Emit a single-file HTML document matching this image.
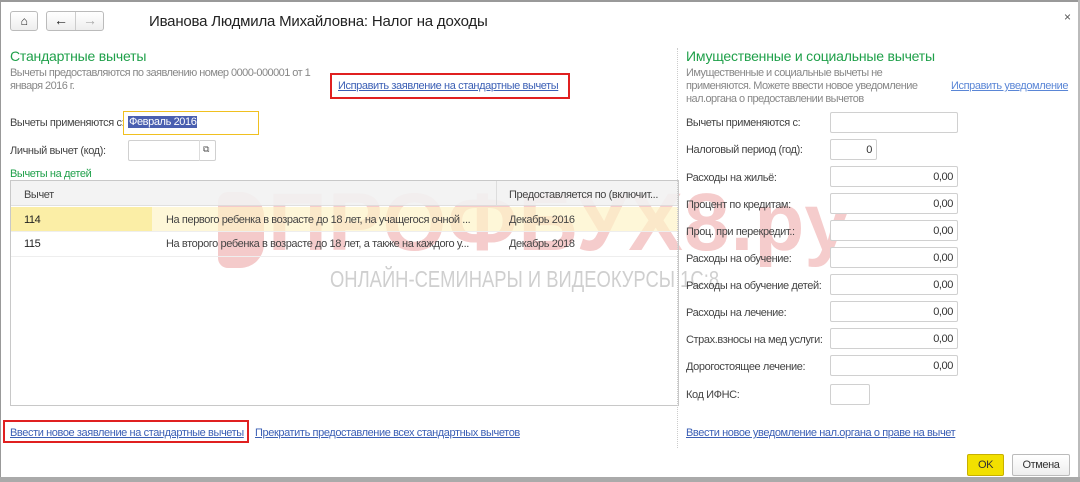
<!DOCTYPE html>
<html><head><meta charset="utf-8"><style>
*{margin:0;padding:0;box-sizing:border-box}
body{width:1080px;height:482px;background:#fff;font-family:"Liberation Sans",sans-serif;font-size:11px;letter-spacing:-0.4px;color:#444;position:relative;overflow:hidden}
.a{position:absolute;white-space:nowrap}
.lnk{color:#3b5fb5;text-decoration:underline}
.inp{position:absolute;border:1px solid #d0d0d0;border-radius:2px;background:#fff;height:21px;text-align:right;padding:4px 4px 0 0;color:#333;line-height:13px}
.g{color:#1fa04a}
.gray{color:#888}
</style></head><body>
<div class="a" style="left:0;top:0;width:1080px;height:2px;background:#999"></div>
<div class="a" style="left:0;top:0;width:1px;height:482px;background:#999"></div>
<div class="a" style="left:1078px;top:0;width:2px;height:482px;background:#bbb"></div>
<div class="a" style="left:0;top:477px;width:1080px;height:5px;background:#aaa"></div>
<div class="a" style="left:10px;top:11px;width:28px;height:20px;border:1px solid #bbb;border-radius:3px;background:linear-gradient(#fff,#eee);text-align:center;font-size:12px;line-height:18px;color:#222">&#8962;</div>
<div class="a" style="left:46px;top:11px;width:58px;height:20px;border:1px solid #bbb;border-radius:3px;background:linear-gradient(#fff,#eee)"></div>
<div class="a" style="left:75px;top:12px;width:1px;height:18px;background:#ccc"></div>
<div class="a" style="left:54px;top:12px;font-size:14px;color:#222;font-weight:bold">&#8592;</div>
<div class="a" style="left:83px;top:12px;font-size:14px;color:#aaa">&#8594;</div>
<div class="a" style="left:149px;top:13px;font-size:15px;color:#222;letter-spacing:-0.2px">Иванова Людмила Михайловна: Налог на доходы</div>
<div class="a" style="left:1064px;top:10px;font-size:12px;color:#555">×</div>
<div class="a" style="left:218px;top:192px;width:46px;height:76px;background:#f4caca;border-radius:10px 24px 24px 10px"></div>
<div class="a" style="left:268px;top:178px;font-size:82px;font-weight:bold;color:#f5cccc;letter-spacing:1px;line-height:90px">ПРОФБУХ8.ру</div>
<div class="a" style="left:330px;top:266px;font-size:23px;color:#cfcfcf;transform:scaleX(.8);transform-origin:left;letter-spacing:0">ОНЛАЙН-СЕМИНАРЫ И ВИДЕОКУРСЫ 1С:8</div>
<div class="a g" style="left:10px;top:48px;font-size:14px;letter-spacing:-0.2px">Стандартные вычеты</div>
<div class="a gray" style="left:10px;top:67px;line-height:13px;letter-spacing:-0.55px">Вычеты предоставляются по заявлению номер 0000-000001 от 1<br>января 2016 г.</div>
<div class="a" style="left:330px;top:73px;width:240px;height:26px;border:2px solid #e02020"></div>
<div class="a lnk" style="left:338px;top:80px">Исправить заявление на стандартные вычеты</div>
<div class="a" style="left:10px;top:117px">Вычеты применяются с:</div>
<div class="a" style="left:123px;top:111px;width:136px;height:24px;border:1px solid #f0c020;background:#fff"></div>
<div class="a" style="left:128px;top:116px;background:#4a5fb0;color:#fff;padding:0 1px">Февраль 2016</div>
<div class="a" style="left:10px;top:145px">Личный вычет (код):</div>
<div class="inp" style="left:128px;top:140px;width:88px"></div>
<div class="a" style="left:199px;top:140px;width:1px;height:21px;background:#ddd"></div>
<div class="a" style="left:203px;top:144px;font-size:9px;color:#555">⧉</div>
<div class="a g" style="left:10px;top:168px">Вычеты на детей</div>
<div class="a" style="left:10px;top:180px;width:669px;height:226px;border:1px solid #c8c8c8"></div>
<div class="a" style="left:11px;top:181px;width:667px;height:25px;background:#f2f2f2;opacity:.9;border-bottom:1px solid #ddd"></div>
<div class="a" style="left:496px;top:181px;width:1px;height:25px;background:#ddd"></div>
<div class="a" style="left:24px;top:189px">Вычет</div>
<div class="a" style="left:509px;top:189px">Предоставляется по (включит...</div>
<div class="a" style="left:11px;top:207px;width:141px;height:24px;background:#fbec9c;opacity:.9"></div>
<div class="a" style="left:152px;top:207px;width:526px;height:24px;background:#fdf4c8;opacity:.7"></div>
<div class="a" style="left:11px;top:231px;width:667px;height:1px;background:#eee"></div>
<div class="a" style="left:11px;top:256px;width:667px;height:1px;background:#eee"></div>
<div class="a" style="left:24px;top:214px;color:#222">114</div>
<div class="a" style="left:166px;top:214px">На первого ребенка в возрасте до 18 лет, на учащегося очной ...</div>
<div class="a" style="left:509px;top:214px">Декабрь 2016</div>
<div class="a" style="left:24px;top:238px;color:#222">115</div>
<div class="a" style="left:166px;top:238px">На второго ребенка в возрасте до 18 лет, а также на каждого у...</div>
<div class="a" style="left:509px;top:238px">Декабрь 2018</div>
<div class="a" style="left:3px;top:420px;width:246px;height:23px;border:2px solid #e02020"></div>
<div class="a lnk" style="left:10px;top:427px">Ввести новое заявление на стандартные вычеты</div>
<div class="a lnk" style="left:255px;top:427px">Прекратить предоставление всех стандартных вычетов</div>
<div class="a" style="left:677px;top:48px;height:400px;border-left:1px dotted #ccc"></div>
<div class="a g" style="left:686px;top:48px;font-size:14px;letter-spacing:-0.2px">Имущественные и социальные вычеты</div>
<div class="a gray" style="left:686px;top:67px;line-height:13px;letter-spacing:-0.55px">Имущественные и социальные вычеты не<br>применяются. Можете ввести новое уведомление<br>нал.органа о предоставлении вычетов</div>
<div class="a lnk" style="left:951px;top:80px;color:#5a86d6">Исправить уведомление</div>
<div class="a" style="left:686px;top:117px">Вычеты применяются с:</div>
<div class="inp" style="left:830px;top:112px;width:128px"></div>
<div class="a" style="left:686px;top:144px">Налоговый период (год):</div>
<div class="inp" style="left:830px;top:139px;width:47px">0</div>
<div class="a" style="left:686px;top:172px">Расходы на жильё:</div><div class="inp" style="left:830px;top:166px;width:128px">0,00</div>
<div class="a" style="left:686px;top:199px">Процент по кредитам:</div><div class="inp" style="left:830px;top:193px;width:128px">0,00</div>
<div class="a" style="left:686px;top:226px">Проц. при перекредит.:</div><div class="inp" style="left:830px;top:220px;width:128px">0,00</div>
<div class="a" style="left:686px;top:253px">Расходы на обучение:</div><div class="inp" style="left:830px;top:247px;width:128px">0,00</div>
<div class="a" style="left:686px;top:280px">Расходы на обучение детей:</div><div class="inp" style="left:830px;top:274px;width:128px">0,00</div>
<div class="a" style="left:686px;top:307px">Расходы на лечение:</div><div class="inp" style="left:830px;top:301px;width:128px">0,00</div>
<div class="a" style="left:686px;top:334px">Страх.взносы на мед услуги:</div><div class="inp" style="left:830px;top:328px;width:128px">0,00</div>
<div class="a" style="left:686px;top:361px">Дорогостоящее лечение:</div><div class="inp" style="left:830px;top:355px;width:128px">0,00</div>
<div class="a" style="left:686px;top:389px">Код ИФНС:</div><div class="inp" style="left:830px;top:384px;width:40px"></div>
<div class="a lnk" style="left:686px;top:427px">Ввести новое уведомление нал.органа о праве на вычет</div>
<div class="a" style="left:967px;top:454px;width:37px;height:22px;border:1px solid #c8b000;border-radius:2px;background:#f2e000;text-align:center;line-height:20px;color:#333">OK</div>
<div class="a" style="left:1012px;top:454px;width:58px;height:22px;border:1px solid #bbb;border-radius:2px;background:linear-gradient(#fff,#eee);text-align:center;line-height:20px;color:#333">Отмена</div>
</body></html>
